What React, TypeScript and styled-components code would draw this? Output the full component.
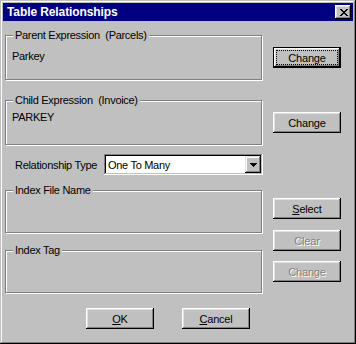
import styled, { createGlobalStyle } from "styled-components";

const GlobalStyle = createGlobalStyle`
  html, body {
    margin: 0;
    padding: 0;
    background: #c0c0c0;
  }
  * {
    box-sizing: border-box;
  }
`;

const App = () => {
    return (
        <>
            <GlobalStyle />
            <Window>
                <TitleBar>
                    <Title>Table Relationships</Title>
                    <CloseButton aria-label="Close">
                        <svg width="8" height="7" viewBox="0 0 8 7">
                            <path
                                d="M0 0h2v1h1v1h2V1h1V0h2v1H7v1H6v1H5v1h1v1h1v1h1v1H6V6H5V5H3v1H2v1H0V6h1V5h1V4h1V3H2V2H1V1H0z"
                                fill="#000"
                            />
                        </svg>
                    </CloseButton>
                </TitleBar>

                <Body>
                    <Columns>
                        <LeftColumn>
                            <Group $height={45} $mt={14}>
                                <Caption>Parent Expression&nbsp;&nbsp;(Parcels)</Caption>
                                <GroupText $pt={14}>Parkey</GroupText>
                            </Group>
                            <Group $height={45} $mt={20}>
                                <Caption>Child Expression&nbsp;&nbsp;(Invoice)</Caption>
                                <GroupText $pt={10}>PARKEY</GroupText>
                            </Group>
                            <TypeRow>
                                <TypeLabel>Relationship Type</TypeLabel>
                                <Combo>
                                    <ComboValue>One To Many</ComboValue>
                                    <ComboArrow>
                                        <svg width="7" height="4" viewBox="0 0 7 4">
                                            <path d="M0 0h7v1H6v1H5v1H4v1H3V3H2V2H1V1H0z" fill="#000" />
                                        </svg>
                                    </ComboArrow>
                                </Combo>
                            </TypeRow>
                            <Group $height={43} $mt={15}>
                                <Caption>Index File Name</Caption>
                            </Group>
                            <Group $height={43} $mt={17}>
                                <Caption>Index Tag</Caption>
                            </Group>
                        </LeftColumn>

                        <RightColumn>
                            <Button $mt={26} $default>
                                <Focus>Change</Focus>
                            </Button>
                            <Button $mt={44}>Change</Button>
                            <Button $mt={65}>
                                <u>S</u>elect
                            </Button>
                            <Button $mt={11} disabled>
                                Clear
                            </Button>
                            <Button $mt={10} disabled>
                                Change
                            </Button>
                        </RightColumn>
                    </Columns>

                    <Footer>
                        <Button>
                            <u>O</u>K
                        </Button>
                        <Button>
                            <u>C</u>ancel
                        </Button>
                    </Footer>
                </Body>
            </Window>
        </>
    );
};

export default App;

const Window = styled.div`
    width: 356px;
    height: 344px;
    padding: 3px;
    background: #c0c0c0;
    box-shadow: inset -1px -1px #000, inset 1px 1px #c0c0c0, inset -2px -2px #808080,
        inset 2px 2px #fff;
    display: flex;
    flex-direction: column;
    font-family: "Liberation Sans", Arial, sans-serif;
    font-size: 11px;
    color: #000;
`;

const TitleBar = styled.div`
    height: 18px;
    background: #000080;
    display: flex;
    align-items: center;
    justify-content: space-between;
    padding: 0 2px 0 4px;
`;

const Title = styled.span`
    color: #fff;
    font-weight: bold;
    font-size: 12px;
    letter-spacing: -0.1px;
`;

const CloseButton = styled.button`
    width: 16px;
    height: 14px;
    padding: 0;
    border: none;
    background: #c0c0c0;
    box-shadow: inset -1px -1px #000, inset 1px 1px #fff, inset -2px -2px #808080,
        inset 2px 2px #dfdfdf;
    display: flex;
    align-items: center;
    justify-content: center;
    padding-left: 1px;
`;

const Body = styled.div`
    flex: 1;
    display: flex;
    flex-direction: column;
    padding: 0 0 0 2px;
`;

const Columns = styled.div`
    display: flex;
    gap: 10px;
`;

const LeftColumn = styled.div`
    width: 258px;
    display: flex;
    flex-direction: column;
`;

const RightColumn = styled.div`
    width: 68px;
    display: flex;
    flex-direction: column;
`;

const Group = styled.div<{ $height: number; $mt: number }>`
    position: relative;
    width: 257px;
    height: ${({ $height }) => $height}px;
    margin-top: ${({ $mt }) => $mt}px;
    border: 1px solid #808080;
    box-shadow: 1px 1px 0 #fff, inset 1px 1px 0 #fff;
`;

const Caption = styled.span`
    position: absolute;
    top: -7px;
    left: 7px;
    padding: 0 2px;
    line-height: 13px;
    background: #c0c0c0;
    letter-spacing: -0.3px;
    white-space: nowrap;
`;

const GroupText = styled.div<{ $pt: number }>`
    padding: ${({ $pt }) => $pt}px 0 0 6px;
    line-height: 13px;
    letter-spacing: -0.3px;
`;

const TypeRow = styled.div`
    display: flex;
    align-items: center;
    margin-top: 9px;
    height: 21px;
`;

const TypeLabel = styled.span`
    padding-left: 10px;
    width: 99px;
    letter-spacing: -0.3px;
    white-space: nowrap;
`;

const Combo = styled.div`
    width: 159px;
    height: 21px;
    background: #fff;
    padding: 2px;
    box-shadow: inset -1px -1px #fff, inset 1px 1px #808080, inset -2px -2px #c0c0c0,
        inset 2px 2px #000;
    display: flex;
    align-items: center;
`;

const ComboValue = styled.span`
    flex: 1;
    padding-left: 2px;
    letter-spacing: -0.3px;
`;

const ComboArrow = styled.div`
    width: 16px;
    height: 17px;
    background: #c0c0c0;
    box-shadow: inset -1px -1px #000, inset 1px 1px #dfdfdf, inset -2px -2px #808080,
        inset 2px 2px #fff;
    display: flex;
    align-items: center;
    justify-content: center;
`;

const Button = styled.button<{ $mt?: number; $default?: boolean }>`
    width: 68px;
    height: 21px;
    margin-top: ${({ $mt }) => $mt ?? 0}px;
    padding: 0;
    border: ${({ $default }) => ($default ? "1px solid #000" : "none")};
    background: #c0c0c0;
    box-shadow: inset -1px -1px #000, inset 1px 1px #fff, inset -2px -2px #808080,
        inset 2px 2px #dfdfdf;
    font-family: "Liberation Sans", Arial, sans-serif;
    font-size: 11px;
    letter-spacing: -0.2px;
    color: #000;
    display: flex;
    align-items: center;
    justify-content: center;

    &:disabled {
        color: #808080;
        text-shadow: 1px 1px 0 #fff;
    }

    u {
        text-decoration-thickness: 1px;
        text-underline-offset: 1px;
    }
`;

const Focus = styled.span`
    width: 60px;
    height: 13px;
    outline: 1px dotted #000;
    display: flex;
    align-items: center;
    justify-content: center;
`;

const Footer = styled.div`
    display: flex;
    gap: 28px;
    padding-left: 81px;
    margin-top: 15px;
`;
